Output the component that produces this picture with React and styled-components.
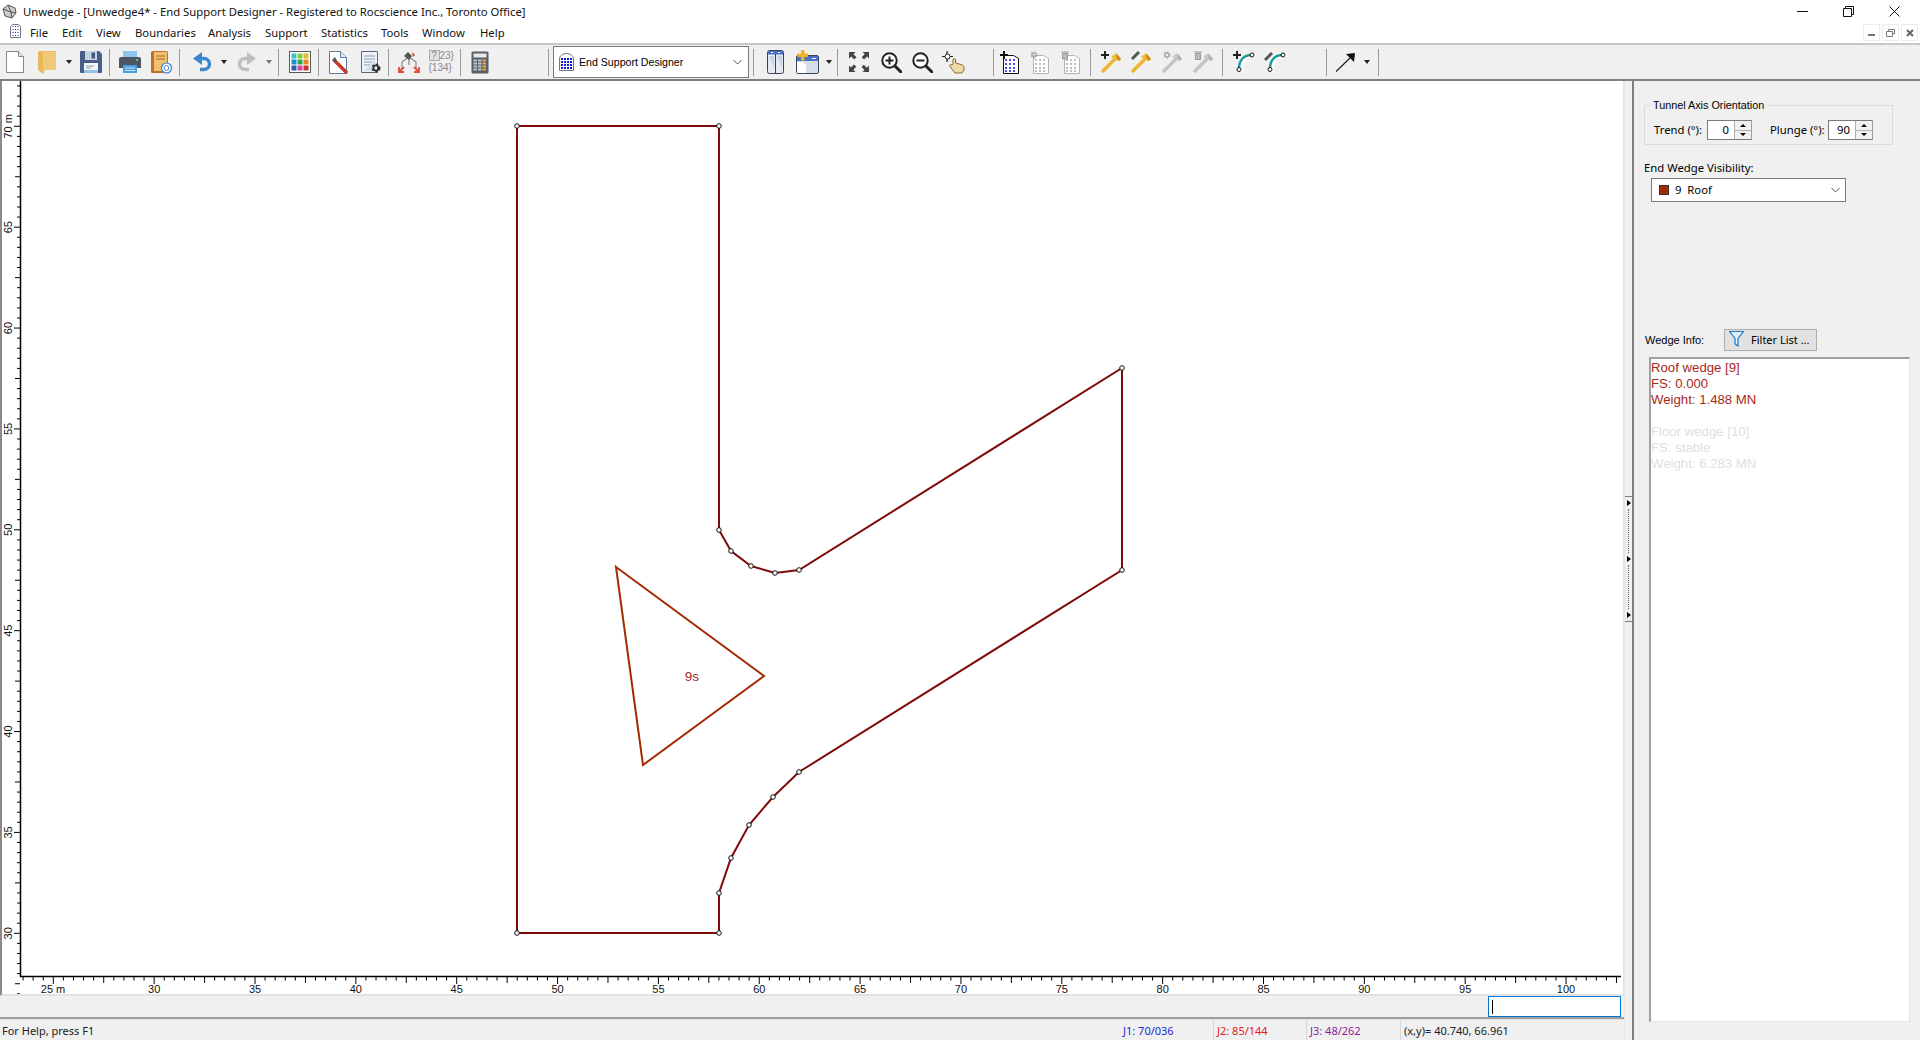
import React from 'react';
import styled, { createGlobalStyle } from 'styled-components';

const GlobalStyle = createGlobalStyle`
  html, body { margin: 0; padding: 0; background: #f0f0f0; overflow: hidden; }
  * { box-sizing: border-box; }
`;

const Frame = styled.div`
  display: flex;
  flex-direction: column;
  width: 1920px;
  height: 1040px;
  overflow: hidden;
  background: #f0f0f0;
  color: #000;
  font-family: "Noto Sans", "Liberation Sans", sans-serif;
  font-size: 11.3px;
`;

const TitleBar = styled.div`
  display: flex;
  align-items: center;
  height: 22px;
  padding-left: 2px;
  background: #fff;
  color: #111;
  svg { flex: none; margin-right: 6px; }
`;

const TitleText = styled.span`
  flex: 1;
  white-space: nowrap;
`;

const WinButton = styled.div`
  display: flex;
  align-items: center;
  justify-content: center;
  width: 46px;
  height: 22px;
`;

const MenuBar = styled.div`
  display: flex;
  align-items: center;
  height: 21px;
  padding-left: 10px;
  background: #fff;
`;

const MenuItem = styled.span`
  display: block;
  width: ${p => p.$w}px;
  white-space: nowrap;
  color: #111;
`;

const MdiButtons = styled.div`
  display: flex;
  gap: 2px;
  margin-left: auto;
  margin-right: 2px;
`;

const MdiButton = styled.div`
  display: flex;
  align-items: center;
  justify-content: center;
  width: 17px;
  height: 17px;
  border: 1px solid #ececec;
`;

const Toolbar = styled.div`
  display: flex;
  align-items: center;
  height: 38px;
  padding-left: 6px;
  background: #f0f0f0;
  border-top: 2px solid #c8c8c8;
  border-bottom: 2px solid #7e7e7e;
`;

const Tool = styled.div`
  display: flex;
  flex: none;
  align-items: center;
  justify-content: center;
  width: ${p => p.$w || 20}px;
  height: 26px;
  margin-left: ${p => p.$ml || 0}px;
`;

const Caret = styled.div`
  flex: none;
  width: 0;
  height: 0;
  margin-left: ${p => p.$ml || 4}px;
  border-left: 3.5px solid transparent;
  border-right: 3.5px solid transparent;
  border-top: 4px solid ${p => (p.$off ? '#777' : '#222')};
`;

const Sep = styled.div`
  flex: none;
  width: 1px;
  height: 27px;
  margin-left: ${p => p.$ml || 0}px;
  background: #9a9a9a;
`;

const Combo = styled.div`
  display: flex;
  flex: none;
  align-items: center;
  width: 196px;
  height: 32px;
  margin-left: ${p => p.$ml || 0}px;
  padding: 0 6px 0 5px;
  background: #fff;
  border: 1px solid #7a7a7a;
  svg:first-child { margin-right: 5px; }
`;

const ComboText = styled.span`
  flex: 1;
  white-space: nowrap;
  font-family: "Liberation Sans", Arial, sans-serif;
  font-size: 10.6px;
`;

const Main = styled.div`
  display: flex;
  flex: 1;
  min-height: 0;
`;

const LeftColumn = styled.div`
  display: flex;
  flex-direction: column;
  width: 1624px;
`;

const Canvas = styled.div`
  height: 915px;
  background: #fff;
  border-left: 2px solid #8a8a8a;
  border-right: 1px solid #e4e4e4;
  border-bottom: 2px solid #e2e2e2;
  svg { display: block; }
`;

const CommandRow = styled.div`
  display: flex;
  justify-content: flex-end;
  align-items: center;
  height: 23px;
  padding-right: 3px;
  border-bottom: 2px solid #a0a0a0;
`;

const CommandInput = styled.div`
  display: flex;
  align-items: center;
  width: 133px;
  height: 21px;
  padding-left: 3px;
  background: #fff;
  border: 1px solid #0078d7;
`;

const Cursor = styled.div`
  width: 1px;
  height: 14px;
  background: #000;
`;

const StatusBar = styled.div`
  display: flex;
  flex: 1;
  align-items: center;
  border-top: 1px solid #e0e0e0;
`;

const StatusCell = styled.div`
  width: ${p => p.$w}px;
  height: 100%;
  padding-left: ${p => p.$pad || 2}px;
  line-height: 21px;
  font-size: 11px;
  white-space: nowrap;
  color: ${p => p.$color || '#222'};
  border-left: ${p => (p.$line ? '1px solid #d8d8d8' : 'none')};
`;

const Splitter = styled.div`
  display: flex;
  flex-direction: column;
  align-items: center;
  flex: none;
  width: 8px;
  padding-top: 415px;
  border-left: 1px solid #e4e4e4;
`;

const SplitEdge = styled.div`
  width: 7px;
  height: 1px;
  margin-top: ${p => p.$mt || 0}px;
  background: #808080;
`;

const SplitArrow = styled.div`
  width: 0;
  height: 0;
  margin-top: 3px;
  border-top: 3px solid transparent;
  border-bottom: 3px solid transparent;
  border-left: 4px solid #000;
`;

const SplitDots = styled.div`
  width: 1px;
  height: 44px;
  margin-top: 3px;
  border-left: 1px dotted #666;
`;

const Panel = styled.div`
  flex: 1;
  display: flex;
  flex-direction: column;
  padding: 24px 10px 0 10px;
  border-left: 2px solid #7e7e7e;
`;

const GroupBox = styled.div`
  position: relative;
  display: flex;
  align-items: center;
  width: 249px;
  height: 40px;
  padding: 10px 0 0 9px;
  border: 1px solid #dcdcdc;
`;

const GroupTitle = styled.span`
  position: absolute;
  top: -8px;
  left: 6px;
  padding: 0 2px;
  background: #f0f0f0;
  white-space: nowrap;
  font-family: "Liberation Sans", Arial, sans-serif;
  font-size: 10.8px;
  line-height: 15px;
`;

const FieldLabel = styled.span`
  width: ${p => p.$w}px;
  margin-top: -2px;
  margin-left: ${p => p.$ml || 0}px;
  white-space: nowrap;
`;

const Spin = styled.div`
  display: flex;
  flex: none;
  width: 45px;
  height: 20px;
  background: #fff;
  border: 1px solid #7a7a7a;
  border-right-color: #a0a0a0;
`;

const SpinValue = styled.div`
  flex: 1;
  text-align: right;
  padding-right: 5px;
  line-height: 17px;
`;

const SpinArrows = styled.div`
  display: flex;
  flex-direction: column;
  width: 17px;
  background: #f0f0f0;
  border-left: 1px solid #b0b0b0;
`;

const SpinHalf = styled.div`
  display: flex;
  flex: 1;
  align-items: center;
  justify-content: center;
  & + & { border-top: 1px solid #b0b0b0; }
  &::after {
    content: '';
    border-left: 3px solid transparent;
    border-right: 3px solid transparent;
    ${p => (p.$up ? 'border-bottom: 3px solid #000;' : 'border-top: 3px solid #000;')}
  }
`;

const SectionLabel = styled.div`
  margin-top: 15px;
  line-height: 16px;
`;

const Select = styled.div`
  display: flex;
  align-items: center;
  width: 195px;
  height: 24px;
  margin: 2px 0 0 7px;
  padding: 0 5px 1px 7px;
  background: #fff;
  border: 1px solid #7a7a7a;
`;

const Swatch = styled.div`
  width: 10px;
  height: 10px;
  margin-right: 6px;
  background: #a52a00;
  border: 1px solid #333;
`;

const SelectText = styled.span`
  flex: 1;
  white-space: pre;
`;

const InfoHeader = styled.div`
  display: flex;
  align-items: center;
  margin-top: 127px;
  padding-left: 1px;
`;

const InfoLabel = styled.span`
  width: 79px;
  font-family: "Liberation Sans", Arial, sans-serif;
  font-size: 11px;
  white-space: nowrap;
`;

const FilterButton = styled.div`
  display: flex;
  align-items: center;
  width: 93px;
  height: 22px;
  padding: 0 0 2px 4px;
  font-size: 11px;
  background: #e1e1e1;
  border: 1px solid #adadad;
  svg { margin-right: 7px; }
`;

const InfoBox = styled.div`
  width: 261px;
  height: 665px;
  margin: 6px 0 0 5px;
  padding: 1px 0 0 0;
  background: #fff;
  border-top: 2px solid #a0a0a0;
  border-left: 2px solid #a0a0a0;
  border-right: 1px solid #e4e4e4;
  border-bottom: 1px solid #e4e4e4;
  font-family: "Liberation Sans", Arial, sans-serif;
  font-size: 13.2px;
  line-height: 16px;
`;

const InfoLine = styled.div`
  height: 16px;
  white-space: nowrap;
  color: ${p => (p.$dim ? '#e0e0e0' : '#a52a20')};
  margin-bottom: ${p => p.$gap || 0}px;
`;

const SetText = styled.div`
  width: 24px;
  font-family: "Liberation Sans", Arial, sans-serif;
  font-size: 10px;
  line-height: 12px;
  color: #888;
  white-space: nowrap;
`;

const SetTop = styled.div`
  display: flex;
  height: 12px;
`;

const SetQuestion = styled.div`
  flex: none;
  width: 11px;
  height: 11px;
  line-height: 9px;
  text-align: center;
  background: #e4e4e4;
  border: 1px solid #aaa;
`;

const px = v => 51.3 + (v - 25) * 20.17;
const py = v => 852.3 - (v - 30) * 20.175;

// outline points are page pixels with the canvas origin (2, 81) taken off
const off = pts => pts.map(([x, y]) => [x - 2, y - 81]);
const outline = off([
  [517, 126], [719, 126], [719, 530], [731, 551], [751, 566], [775, 573], [799, 570],
  [1122, 368], [1122, 570], [799, 772], [773, 797], [749, 825], [731, 858], [719, 893],
  [719, 933], [517, 933],
]);
const triangle = off([[616, 567], [764, 676], [643, 765]]);

function Drawing() {
  const xTicks = [];
  for (let v = 23.5; v <= 102.5; v += 0.5) {
    const major = v % 5 === 0;
    const mid = !major && v % 2.5 === 0;
    xTicks.push(<line key={v} x1={px(v)} x2={px(v)} y1={896} y2={major ? 903 : mid ? 902 : 899.5} stroke="#000" strokeWidth="1" />);
  }
  const yTicks = [];
  for (let v = 25.5; v <= 72; v += 0.5) {
    const major = v % 5 === 0;
    const mid = !major && v % 2.5 === 0;
    yTicks.push(<line key={v} y1={py(v)} y2={py(v)} x2={18} x1={major ? 12 : mid ? 13 : 15} stroke="#000" strokeWidth="1" />);
  }
  const xLabels = [];
  for (let v = 30; v <= 100; v += 5) xLabels.push(v);
  const yLabels = [30, 35, 40, 45, 50, 55, 60, 65];
  return (
    <svg width="1619" height="913" viewBox="0 0 1619 913">
      <polygon points={outline.join(' ')} fill="none" stroke="#7f0a0a" strokeWidth="2" />
      {outline.map(([x, y], i) => (
        <circle key={i} cx={x} cy={y} r="2.3" fill="#fff" stroke="#111" strokeWidth="1" />
      ))}
      <polygon points={triangle.join(' ')} fill="none" stroke="#a52a00" strokeWidth="2" />
      <text x="690" y="600" textAnchor="middle" fontFamily="Liberation Sans" fontSize="13.5" fill="#a52a20">9s</text>
      <line x1="18.5" y1="0" x2="18.5" y2="896" stroke="#000" strokeWidth="1.5" />
      <line x1="18" y1="895.5" x2="1619" y2="895.5" stroke="#000" strokeWidth="1.5" />
      {xTicks}
      {yTicks}
      <g fontFamily="Liberation Sans" fontSize="11" fill="#111">
        <text x="51" y="912" textAnchor="middle">25 m</text>
        {xLabels.map(v => <text key={v} x={px(v)} y="912" textAnchor="middle">{v}</text>)}
        {yLabels.map(v => (
          <text key={v} transform={`translate(10 ${py(v)}) rotate(-90)`} textAnchor="middle">{v}</text>
        ))}
        <text transform={`translate(10 ${py(70)}) rotate(-90)`} textAnchor="middle">70 m</text>
      </g>
    </svg>
  );
}

const AppIcon = () => (
  <svg width="15" height="15" viewBox="0 0 15 15" fill="#ccc" stroke="#555" strokeWidth="1">
    <path d="M1 5l5-4 7 3 1 5-4 5-7-2z" />
    <path d="M1 5l8 3 5 1M9 8l1 6M6 1l3 7" fill="none" />
  </svg>
);

const DocDots = () => (
  <svg width="11" height="14" viewBox="0 0 11 14">
    <path d="M.5 2.5l2-2h6l2 2v11H.5z" fill="#fff" stroke="#777" />
    <g fill="#1a1ae6">
      {[3, 6, 9, 12].map(y => [2.5, 5, 7.5].map(x => <rect key={`${x}-${y}`} x={x} y={y - 1} width="1" height="1" />))}
    </g>
  </svg>
);

const NewDoc = () => (
  <svg width="18" height="22" viewBox="0 0 18 22">
    <path d="M.5.5h12l5 5v16H.5z" fill="#fff" stroke="#7c8a98" />
    <path d="M12.5.5v5h5" fill="#dde4ec" stroke="#7c8a98" />
  </svg>
);

const Folder = () => (
  <svg width="18" height="23" viewBox="0 0 18 23">
    <path d="M0 1l2-1h16v19H7l-2 4-4-3-1-2z" fill="#e8b95c" />
    <path d="M5 1h13v18H6.500l-1.500 3z" fill="#f0c878" />
  </svg>
);

const Save = () => (
  <svg width="22" height="22" viewBox="0 0 22 22">
    <path d="M0 1a1 1 0 0 1 1-1h18l3 3v18a1 1 0 0 1-1 1H1a1 1 0 0 1-1-1z" fill="#4a5f86" />
    <rect x="5" y="0" width="12" height="9" fill="#c7d3e2" />
    <rect x="11.500" y="1.500" width="3.500" height="6" fill="#46597c" />
    <rect x="4" y="12" width="14" height="10" fill="#f4f6f9" />
    <rect x="4" y="19" width="14" height="3" fill="#8fc3ee" />
    <path d="M6 15h8M6 17h5" stroke="#8a98aa" />
  </svg>
);

const Printer = () => (
  <svg width="22" height="22" viewBox="0 0 22 22">
    <rect x="4" y="0" width="14" height="6" fill="#8ac6f0" />
    <path d="M2 6h18a2 2 0 0 1 2 2v9h-4v-3H4v3H0V8a2 2 0 0 1 2-2z" fill="#4d5660" />
    <rect x="17" y="8" width="2" height="2" fill="#3ecf6a" />
    <rect x="4" y="14" width="14" height="8" fill="#4aa0dc" />
    <path d="M6 17h10M6 19.500h10" stroke="#cfe6f7" />
  </svg>
);

const Book = () => (
  <svg width="21" height="23" viewBox="0 0 21 23">
    <rect x="0" y="0" width="17" height="22" rx="1.500" fill="#bf6f26" />
    <rect x="3" y="1" width="13" height="19" fill="#efc16f" />
    <path d="M5 5h9M5 8h9" stroke="#a66a22" />
    <circle cx="15.500" cy="17" r="5" fill="#fff" stroke="#3c7fd0" strokeWidth="1.200" />
    <circle cx="15.500" cy="17" r="2.400" fill="none" stroke="#3c7fd0" />
  </svg>
);

const Undo = ({ flip, off }) => (
  <svg width="20" height="20" viewBox="0 0 20 20" style={flip ? { transform: 'scaleX(-1)' } : undefined}>
    <path d="M4 6.500h7a5.500 5.500 0 0 1 0 11H7" fill="none" stroke={off ? '#bdbdbd' : '#3c86cc'} strokeWidth="3.400" />
    <path d="M9 0v13L0 6.500z" fill={off ? '#bdbdbd' : '#3c86cc'} />
  </svg>
);

const gridColors = [
  '#3ec4c0', '#8cc63f', '#e0b830',
  '#1f8fd0', '#2aa84a', '#e8851e',
  '#2a5ea8', '#d8489a', '#c83030',
];

const ColorGrid = () => (
  <svg width="22" height="22" viewBox="0 0 22 22">
    <rect x=".5" y=".5" width="21" height="21" fill="#fff" stroke="#5a5a5a" />
    {gridColors.map((c, i) => (
      <rect key={i} x={2.500 + (i % 3) * 6} y={2.500 + Math.floor(i / 3) * 6} width="5" height="5" fill={c} />
    ))}
  </svg>
);

const DocWrench = () => (
  <svg width="19" height="23" viewBox="0 0 19 23">
    <path d="M.5.5h11l6 6v16H.5z" fill="#fff" stroke="#5b7aa0" />
    <path d="M11.500.5v6h6" fill="#dfe7f0" stroke="#5b7aa0" />
    <path d="M6 10l11 11" stroke="#c8362e" strokeWidth="3.500" strokeLinecap="round" />
    <path d="M3 9l3-3 2 4-3 1z" fill="#555" />
  </svg>
);

const Gear = ({ x, y, r, color = '#333' }) => (
  <g>
    <circle cx={x} cy={y} r={r} fill="none" stroke={color} strokeWidth={r * 0.7} />
    <circle cx={x} cy={y} r={r * 1.45} fill="none" stroke={color} strokeWidth={r * 0.55} strokeDasharray={`${r * 0.9} ${r * 0.75}`} />
  </g>
);

const DocGear = () => (
  <svg width="20" height="23" viewBox="0 0 20 23">
    <path d="M.5.5h16v21H.5z" fill="#eef2f7" stroke="#5a6a7c" />
    <path d="M3 5h11M3 8h11M3 11h8M3 14h6" stroke="#8aa0b8" />
    <path d="M3 20l11-12v12z" fill="#d6deea" />
    <Gear x={15} y={17} r={2.600} />
  </svg>
);

const Joints = () => (
  <svg width="22" height="22" viewBox="0 0 22 22">
    <path d="M4 11l7-5 7 5M4 11v7M18 11v7M11 6v8" fill="none" stroke="#888" strokeWidth="1.200" />
    <path d="M6 5l5 4 3-4-4-4z" fill="#555" />
    <path d="M14 1l3 3-2 2z" fill="#d23a30" />
    <path d="M1 21l5-5M1 16v5h5M21 21l-5-5M21 16v5h-5" fill="none" stroke="#e24a36" strokeWidth="1.800" />
  </svg>
);

const Calc = () => (
  <svg width="18" height="23" viewBox="0 0 18 23">
    <rect x=".5" y=".5" width="17" height="22" rx="1.500" fill="#55606a" />
    <rect x="2.500" y="2.500" width="13" height="4" fill="#e8e8e8" />
    {[8.500, 11.500, 14.500, 17.500].map((y, r) => [2.500, 7, 11.500].map((x, k) => (
      <rect key={`${r}${k}`} x={x} y={y} width="3.500" height="2" fill={k === 2 ? '#f2a33a' : '#bfc5ca'} />
    )))}
  </svg>
);

const DesignerIcon = () => (
  <svg width="15" height="18" viewBox="0 0 15 18">
    <path d="M.5 17.500V6a7 5.500 0 0 1 14 0v11.500z" fill="#fff" stroke="#777" />
    {[5, 8, 11, 14].map(y => [3, 6, 9, 12].map(x => <rect key={`${x}-${y}`} x={x - 1} y={y} width="2" height="2" fill="#1414e0" />))}
  </svg>
);

const Chevron = () => (
  <svg width="9" height="6" viewBox="0 0 9 6">
    <path d="M.5 1l4 4 4-4" fill="none" stroke="#555" />
  </svg>
);

const SplitView = () => (
  <svg width="17" height="24" viewBox="0 0 17 24">
    <rect x=".5" y=".5" width="16" height="23" rx="2" fill="#e4e9f3" stroke="#39424e" />
    <rect x="1" y="1" width="15" height="3.500" fill="#4a72c8" />
    <path d="M2 6l5 12V6zM10 6l5 12V6z" fill="#c9d3e8" />
    <path d="M8.500 4v19" stroke="#39424e" />
    <path d="M4 2.500h2M11 2.500h2" stroke="#fff" />
  </svg>
);

const AddTab = () => (
  <svg width="23" height="24" viewBox="0 0 23 24">
    <rect x=".5" y="5.500" width="22" height="18" rx="1.500" fill="#d5dcea" stroke="#3c4654" />
    <rect x="1" y="6" width="21" height="5" fill="#4a72c8" />
    <path d="M16 8.500h4" stroke="#fff" />
    <path d="M1 12h6l3 3v8H1z" fill="#fff" />
    <path d="M5 0h3.500v3.500H12V7H8.500v3.500H5V7H1.500V3.500H5z" fill="#eeb420" />
  </svg>
);

const FullScreen = () => (
  <svg width="20" height="20" viewBox="0 0 20 20" fill="#444">
    <path d="M0 0h6.500L4.500 2.200 7.500 5.200 5.200 7.500 2.200 4.500 0 6.500z" />
    <path d="M20 0v6.500l-2-2-3 3-2.300-2.300 3-3-2-2.200z" />
    <path d="M0 20v-6.500l2 2 3-3 2.300 2.300-3 3 2.200 2.200z" />
    <path d="M20 20h-6.500l2-2-3-3 2.300-2.300 3 3 2.200-2.200z" />
  </svg>
);

const Zoom = ({ plus }) => (
  <svg width="21" height="21" viewBox="0 0 21 21">
    <circle cx="8.500" cy="8.500" r="7.200" fill="#fff" stroke="#222" strokeWidth="2" />
    <path d="M14 14l6 6" stroke="#222" strokeWidth="3" strokeLinecap="round" />
    <path d={plus ? 'M4.500 8.500h8M8.500 4.500v8' : 'M4.500 8.500h8'} stroke="#222" strokeWidth="2" />
  </svg>
);

const Pan = () => (
  <svg width="23" height="23" viewBox="0 0 23 23">
    <path d="M5 0v11M0 5.500h11" stroke="#222" strokeWidth="1.200" />
    <circle cx="5.500" cy="5.500" r="2.500" fill="#fff" stroke="#222" />
    <path d="M11 13V9a1.300 1.300 0 0 1 2.600 0v3l5.400 1.500c2 .6 3 1.500 3 3.500v2l-2 3h-7l-5-6.500c-1-1.500.5-2.500 2-1.500z" fill="#f0d9a8" stroke="#8a6a30" />
  </svg>
);

const PageGrid = ({ off, mark }) => {
  const c = off ? '#b4b4b4' : '#111';
  const dot = off ? '#a8a8a8' : '#1414e0';
  return (
    <svg width="20" height="23" viewBox="0 0 20 23">
      <path d="M3.500 4.500h10l5 3v15h-15z" fill="#fff" stroke={c} />
      {[9, 13, 17, 20].map(y => [6, 10, 14].map(x => (
        <path key={`${x}-${y}`} d={`M${x - 1} ${y}h2M${x} ${y - 1}v2`} stroke={dot} />
      )))}
      {mark === 'plus' && <path d="M0 4h8M4 0v8" stroke="#111" strokeWidth="2" />}
      {mark === 'gear' && <Gear x={4} y={4} r={2} color="#aaa" />}
      {mark === 'trash' && <path d="M0 1h8M1.500 2.500h5v5.500h-5z" fill="#bbb" stroke="#999" />}
    </svg>
  );
};

const Bolt = ({ off, mark }) => (
  <svg width="21" height="22" viewBox="0 0 21 22">
    <path d="M2 20L15 7" stroke={off ? '#c4c4c4' : '#eeb52e'} strokeWidth="3.400" strokeLinecap="round" />
    <path d="M10 6l5-4 5 6-3 2z" fill={off ? '#c8c8c8' : '#f0b92e'} />
    <path d="M16 3l4 5-2 2-3-4z" fill={off ? '#b0b0b0' : '#c98a1a'} />
    {mark === 'plus' && <path d="M0 4h8M4 0v8" stroke="#222" strokeWidth="2" />}
    {mark === 'pencil' && <path d="M1 8l7-7" stroke="#555" strokeWidth="3" />}
    {mark === 'gear' && <Gear x={5} y={4} r={2} color="#aaa" />}
    {mark === 'trash' && <path d="M1 1h8M2.500 2.500h5v6h-5z" fill="#bbb" stroke="#999" />}
  </svg>
);

const Curve = ({ mark }) => (
  <svg width="23" height="22" viewBox="0 0 23 22">
    <path d="M6 20C6 10 10 4 19 3h4v3h-3C13 7 10 12 10 22z" fill="#fff" />
    <path d="M6 18C6 10 10 4.500 18 4" fill="none" stroke="#0f9a9a" strokeWidth="2.400" />
    <circle cx="19" cy="4" r="2" fill="#fff" stroke="#111" />
    <circle cx="6" cy="18.500" r="2" fill="#fff" stroke="#111" />
    {mark === 'plus' && <path d="M0 4h8M4 0v8" stroke="#222" strokeWidth="2" />}
    {mark === 'pencil' && <path d="M1 9l7-7" stroke="#555" strokeWidth="3" />}
  </svg>
);

const ArrowTool = () => (
  <svg width="19" height="19" viewBox="0 0 19 19">
    <path d="M0 18.500L14 5" stroke="#111" strokeWidth="1.100" />
    <path d="M10 1l9-1-1 9z" fill="#111" />
  </svg>
);

const Funnel = () => (
  <svg width="15" height="16" viewBox="0 0 15 16">
    <path d="M.5.5h14L9 7.500v7.500l-3-2V7.500z" fill="#dff0fb" stroke="#1b78c8" strokeWidth="1.200" />
  </svg>
);

export default function App() {
  return (
    <Frame>
      <GlobalStyle />
      <TitleBar>
        <AppIcon />
        <TitleText>Unwedge - [Unwedge4* - End Support Designer - Registered to Rocscience Inc., Toronto Office]</TitleText>
        <WinButton>
          <svg width="11" height="1"><rect width="11" height="1" fill="#111" /></svg>
        </WinButton>
        <WinButton>
          <svg width="11" height="11" viewBox="0 0 11 11" fill="none" stroke="#111"><path d="M.5 2.500h8v8h-8zM2.500 2.500v-2h8v8h-2" /></svg>
        </WinButton>
        <WinButton>
          <svg width="11" height="11" viewBox="0 0 11 11" stroke="#111"><path d="M.5.5l10 10M10.500.5l-10 10" /></svg>
        </WinButton>
      </TitleBar>
      <MenuBar>
        <MenuItem $w={20}><DocDots /></MenuItem>
        <MenuItem $w={32}>File</MenuItem>
        <MenuItem $w={34}>Edit</MenuItem>
        <MenuItem $w={39}>View</MenuItem>
        <MenuItem $w={73}>Boundaries</MenuItem>
        <MenuItem $w={57}>Analysis</MenuItem>
        <MenuItem $w={56}>Support</MenuItem>
        <MenuItem $w={60}>Statistics</MenuItem>
        <MenuItem $w={41}>Tools</MenuItem>
        <MenuItem $w={58}>Window</MenuItem>
        <MenuItem $w={30}>Help</MenuItem>
        <MdiButtons>
          <MdiButton>
            <svg width="7" height="7"><rect y="5" width="7" height="2" fill="#777" /></svg>
          </MdiButton>
          <MdiButton>
            <svg width="9" height="8" viewBox="0 0 9 8" fill="none" stroke="#777"><path d="M.5 2.500h6v5h-6zM2.500 2.500v-2h6v4h-2" /></svg>
          </MdiButton>
          <MdiButton>
            <svg width="8" height="8" viewBox="0 0 8 8" stroke="#666" strokeWidth="2"><path d="M1 1l6 6M7 1l-6 6" /></svg>
          </MdiButton>
        </MdiButtons>
      </MenuBar>
      <Toolbar>
        <Tool $w={18}><NewDoc /></Tool>
        <Tool $w={18} $ml={14}><Folder /></Tool>
        <Caret $ml={10} />
        <Tool $w={22} $ml={8}><Save /></Tool>
        <Sep $ml={7} />
        <Tool $w={22} $ml={9}><Printer /></Tool>
        <Tool $w={21} $ml={10}><Book /></Tool>
        <Sep $ml={7} />
        <Tool $ml={13}><Undo /></Tool>
        <Caret $ml={8} />
        <Tool $ml={9}><Undo flip off /></Tool>
        <Caret $ml={10} $off />
        <Sep $ml={6} />
        <Tool $w={22} $ml={10}><ColorGrid /></Tool>
        <Sep $ml={7} />
        <Tool $w={19} $ml={10}><DocWrench /></Tool>
        <Tool $w={20} $ml={13}><DocGear /></Tool>
        <Sep $ml={7} />
        <Tool $w={22} $ml={9}><Joints /></Tool>
        <Tool $w={23} $ml={9}>
          <SetText>
            <SetTop><SetQuestion>?</SetQuestion>{'23}'}</SetTop>
            {'{134}'}
          </SetText>
        </Tool>
        <Sep $ml={8} />
        <Tool $w={18} $ml={10}><Calc /></Tool>
        <Sep $ml={59} />
        <Combo $ml={4}>
          <DesignerIcon />
          <ComboText>End Support Designer</ComboText>
          <Chevron />
        </Combo>
        <Sep $ml={4} />
        <Tool $w={17} $ml={13}><SplitView /></Tool>
        <Tool $w={23} $ml={12}><AddTab /></Tool>
        <Caret $ml={7} />
        <Sep $ml={5} />
        <Tool $ml={11}><FullScreen /></Tool>
        <Tool $w={21} $ml={12}><Zoom plus /></Tool>
        <Tool $w={21} $ml={10}><Zoom /></Tool>
        <Tool $w={23} $ml={9}><Pan /></Tool>
        <Sep $ml={28} />
        <Tool $ml={6}><PageGrid mark="plus" /></Tool>
        <Tool $ml={10}><PageGrid off mark="gear" /></Tool>
        <Tool $ml={11}><PageGrid off mark="trash" /></Tool>
        <Sep $ml={9} />
        <Tool $w={21} $ml={10}><Bolt mark="plus" /></Tool>
        <Tool $w={21} $ml={9}><Bolt mark="pencil" /></Tool>
        <Tool $w={21} $ml={10}><Bolt off mark="gear" /></Tool>
        <Tool $w={21} $ml={10}><Bolt off mark="trash" /></Tool>
        <Sep $ml={8} />
        <Tool $w={23} $ml={10}><Curve mark="plus" /></Tool>
        <Tool $w={23} $ml={8}><Curve mark="pencil" /></Tool>
        <Sep $ml={39} />
        <Tool $w={19} $ml={9}><ArrowTool /></Tool>
        <Caret $ml={9} />
        <Sep $ml={8} />
      </Toolbar>
      <Main>
        <LeftColumn>
          <Canvas><Drawing /></Canvas>
          <CommandRow>
            <CommandInput><Cursor /></CommandInput>
          </CommandRow>
          <StatusBar>
            <StatusCell $w={1121}>For Help, press F1</StatusCell>
            <StatusCell $w={92} $pad={2} $color="#2222dd">J1: 70/036</StatusCell>
            <StatusCell $w={93} $line $pad={3} $color="#e02020">J2: 85/144</StatusCell>
            <StatusCell $w={94} $line $pad={3} $color="#8a1a9a">J3: 48/262</StatusCell>
            <StatusCell $w={224} $line $pad={3}>(x,y)= 40.740, 66.961</StatusCell>
          </StatusBar>
        </LeftColumn>
        <Splitter>
          <SplitEdge />
          <SplitArrow />
          <SplitDots />
          <SplitArrow />
          <SplitDots />
          <SplitArrow />
          <SplitEdge $mt={3} />
        </Splitter>
        <Panel>
          <GroupBox>
            <GroupTitle>Tunnel Axis Orientation</GroupTitle>
            <FieldLabel $w={53}>Trend (°):</FieldLabel>
            <Spin>
              <SpinValue>0</SpinValue>
              <SpinArrows><SpinHalf $up /><SpinHalf /></SpinArrows>
            </Spin>
            <FieldLabel $w={58} $ml={18}>Plunge (°):</FieldLabel>
            <Spin>
              <SpinValue>90</SpinValue>
              <SpinArrows><SpinHalf $up /><SpinHalf /></SpinArrows>
            </Spin>
          </GroupBox>
          <SectionLabel>End Wedge Visibility:</SectionLabel>
          <Select>
            <Swatch />
            <SelectText>9  Roof</SelectText>
            <Chevron />
          </Select>
          <InfoHeader>
            <InfoLabel>Wedge Info:</InfoLabel>
            <FilterButton><Funnel />Filter List ...</FilterButton>
          </InfoHeader>
          <InfoBox>
            <InfoLine>Roof wedge [9]</InfoLine>
            <InfoLine>FS: 0.000</InfoLine>
            <InfoLine $gap={16}>Weight: 1.488 MN</InfoLine>
            <InfoLine $dim>Floor wedge [10]</InfoLine>
            <InfoLine $dim>FS: stable</InfoLine>
            <InfoLine $dim>Weight: 6.283 MN</InfoLine>
          </InfoBox>
        </Panel>
      </Main>
    </Frame>
  );
}
